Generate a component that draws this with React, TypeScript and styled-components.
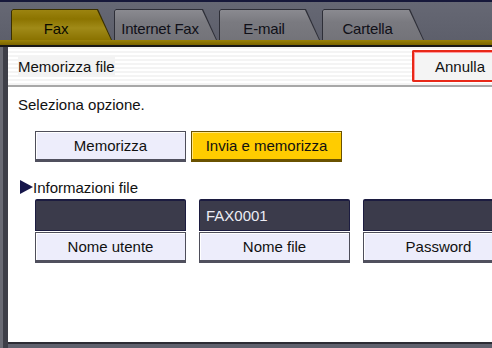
import React, { FC } from 'react'
import styled, { createGlobalStyle } from 'styled-components'

const GlobalStyle = createGlobalStyle`
    html, body {
        margin: 0;
        padding: 0;
        background: #5c5e6a;
    }
    body {
        font-family: "Liberation Sans", Arial, sans-serif;
        font-size: 15px;
        color: #111;
    }
`

const Screen = styled.div`
    width: 492px;
    height: 348px;
    display: flex;
    flex-direction: column;
    background: #5f616d;
    border-top: 2px solid #16183a;
    box-sizing: border-box;
    overflow: hidden;
`

const TabBar = styled.div`
    height: 38px;
    display: flex;
    align-items: flex-end;
    padding-left: 11px;
    gap: 2px;
    background: linear-gradient(#666874, #5d5f6b);
`

const TabOuter = styled.div<{ $active?: boolean; $w: number }>`
    width: ${p => p.$w}px;
    height: 31px;
    padding: 1px 0 0 1px;
    box-sizing: border-box;
    background: ${p => (p.$active ? '#3a3000' : '#2e2f38')};
    clip-path: polygon(0 2px, 2px 0, calc(100% - 14px) 0, 100% 100%, 0 100%);
`

const TabInner = styled.div<{ $active?: boolean }>`
    height: 100%;
    display: flex;
    align-items: center;
    justify-content: center;
    padding-right: 12px;
    padding-top: 6px;
    box-sizing: border-box;
    letter-spacing: -0.2px;
    color: ${p => (p.$active ? '#0a0a00' : '#101018')};
    background: ${p =>
        p.$active
            ? 'linear-gradient(#9c8410 0%, #8c7400 30%, #a08a18 60%, #8a7200 100%)'
            : 'linear-gradient(#8a8a90, #7a7a80 40%, #737379)'};
    clip-path: polygon(0 1px, 1px 0, calc(100% - 15px) 0, calc(100% - 1px) 100%, 0 100%);
`

const GoldBar = styled.div`
    height: 5px;
    background: linear-gradient(#9a8208, #7a6400);
    border-bottom: 2px solid #181818;
`

const Body = styled.div`
    flex: 1;
    display: flex;
    min-height: 0;
`

const LeftStrip = styled.div`
    width: 8px;
    background: linear-gradient(90deg, #6a6b74 0 3px, #3e3f48 3px 8px);
`

const Panel = styled.div`
    flex: 1;
    background: #ffffff;
    display: flex;
    flex-direction: column;
    border-bottom: 2px solid #2c2c34;
    margin-bottom: 4px;
    overflow: hidden;
`

const TitleBar = styled.div`
    height: 40px;
    display: flex;
    align-items: center;
    justify-content: space-between;
    padding-left: 10px;
    box-sizing: border-box;
    border-bottom: 2px solid #a8a8a8;
    background: repeating-linear-gradient(#f4f4f4 0 2px, #ffffff 2px 4px);
`

const Title = styled.span`
    background: #f3f3f3;
    padding: 2px 0;
`

const CancelButton = styled.div`
    width: 88px;
    height: 32px;
    margin-right: -8px;
    box-sizing: border-box;
    border: 2px solid #e82818;
    border-right: none;
    border-radius: 2px 0 0 2px;
    box-shadow: inset 1px 1px 0 #ff9aa0;
    background: #f4f4f4;
    display: flex;
    align-items: center;
    justify-content: flex-end;
    padding-right: 15px;
    color: #111;
`

const Content = styled.div`
    padding: 9px 0 0 10px;
    display: flex;
    flex-direction: column;
`

const Prompt = styled.div`
    height: 18px;
    line-height: 18px;
`

const ButtonRow = styled.div`
    display: flex;
    gap: 5px;
    margin: 17px 0 0 17px;
`

const OptionButton = styled.div<{ $selected?: boolean }>`
    width: 151px;
    height: 31px;
    box-sizing: border-box;
    display: flex;
    align-items: center;
    justify-content: center;
    background: ${p => (p.$selected ? '#ffcc00' : '#ededfb')};
    border: 1px solid ${p => (p.$selected ? '#6a5200' : '#4e4e5a')};
    border-bottom-width: 3px;
    border-bottom-color: ${p => (p.$selected ? '#6a5200' : '#50505e')};
    box-shadow: ${p => (p.$selected ? 'inset 1px 1px 0 #ffe680' : 'inset 1px 1px 0 #ffffff')};
`

const SectionLabel = styled.div`
    display: flex;
    align-items: center;
    margin-top: 16px;
    margin-left: 2px;
    height: 18px;
`

const Arrow = styled.span`
    width: 0;
    height: 0;
    border-top: 7px solid transparent;
    border-bottom: 7px solid transparent;
    border-left: 13px solid #15154a;
`

const CardRow = styled.div`
    display: flex;
    gap: 13px;
    margin: 3px 0 0 17px;
`

const Card = styled.div`
    width: 151px;
    flex-shrink: 0;
    display: flex;
    flex-direction: column;
`

const CardValue = styled.div`
    height: 32px;
    box-sizing: border-box;
    background: #3b3b4b;
    border: 1px solid #1c1c40;
    border-top-width: 2px;
    border-radius: 2px 2px 0 0;
    color: #ececf4;
    display: flex;
    align-items: center;
    padding-left: 6px;
`

const CardButton = styled.div`
    height: 31px;
    box-sizing: border-box;
    margin-top: 1px;
    background: #ededfb;
    border: 1px solid #4e4e5a;
    border-bottom-width: 3px;
    border-bottom-color: #50505e;
    box-shadow: inset 1px 1px 0 #ffffff;
    display: flex;
    align-items: center;
    justify-content: center;
`

const tabs = [
    { label: 'Fax', w: 101, active: true },
    { label: 'Internet Fax', w: 103 },
    { label: 'E-mail', w: 101 },
    { label: 'Cartella', w: 102 },
]

const fields = [
    { label: 'Nome utente', value: '' },
    { label: 'Nome file', value: 'FAX0001' },
    { label: 'Password', value: '' },
]

const App: FC = () => {
    return (
        <>
            <GlobalStyle />
            <Screen>
                <TabBar>
                    {tabs.map(t => (
                        <TabOuter key={t.label} $w={t.w} $active={t.active}>
                            <TabInner $active={t.active}>{t.label}</TabInner>
                        </TabOuter>
                    ))}
                </TabBar>
                <GoldBar />
                <Body>
                    <LeftStrip />
                    <Panel>
                        <TitleBar>
                            <Title>Memorizza file</Title>
                            <CancelButton>Annulla</CancelButton>
                        </TitleBar>
                        <Content>
                            <Prompt>Seleziona opzione.</Prompt>
                            <ButtonRow>
                                <OptionButton>Memorizza</OptionButton>
                                <OptionButton $selected>Invia e memorizza</OptionButton>
                            </ButtonRow>
                            <SectionLabel>
                                <Arrow />
                                Informazioni file
                            </SectionLabel>
                            <CardRow>
                                {fields.map(f => (
                                    <Card key={f.label}>
                                        <CardValue>{f.value}</CardValue>
                                        <CardButton>{f.label}</CardButton>
                                    </Card>
                                ))}
                            </CardRow>
                        </Content>
                    </Panel>
                </Body>
            </Screen>
        </>
    )
}

export default App
